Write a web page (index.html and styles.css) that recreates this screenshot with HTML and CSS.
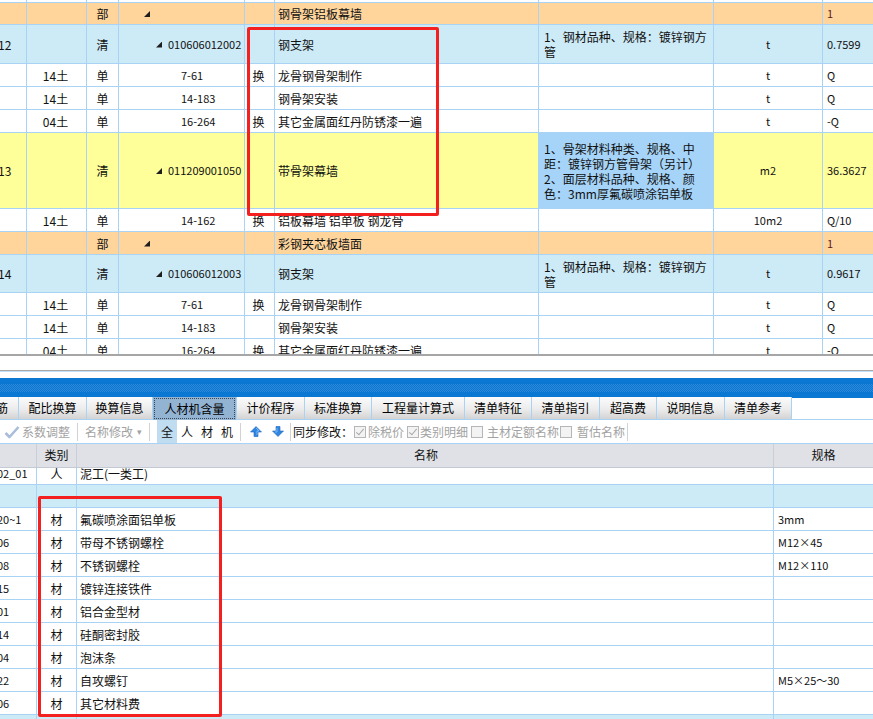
FILE: index.html
```html
<!DOCTYPE html>
<html lang="zh-CN">
<head>
<meta charset="UTF-8">
<meta name="viewport" content="width=device-width, initial-scale=1.0">
<title>分部分项工程</title>
<link rel="stylesheet" href="styles.css">
</head>
<body>
<div class="upper">
    <div class="row first"><div></div><div></div><div></div><div></div><div></div><div></div><div></div><div></div><div></div></div>
    <div class="row bu h22"><div></div><div></div><div>部</div><div class="l1"><span class="tri"></span></div><div></div><div>钢骨架铝板幕墙</div><div></div><div></div><div class="red">1</div></div>
    <div class="row qing h39"><div><span class="cut">12</span></div><div></div><div>清</div><div class="l2"><span class="tri"></span>010606012002</div><div></div><div>钢支架</div><div>1、钢材品种、规格：镀锌钢方管</div><div>t</div><div>0.7599</div></div>
    <div class="row"><div></div><div>14土</div><div>单</div><div class="l3">7-61</div><div>换</div><div>龙骨钢骨架制作</div><div></div><div>t</div><div>Q</div></div>
    <div class="row"><div></div><div>14土</div><div>单</div><div class="l3">14-183</div><div></div><div>钢骨架安装</div><div></div><div>t</div><div>Q</div></div>
    <div class="row"><div></div><div>04土</div><div>单</div><div class="l3">16-264</div><div>换</div><div>其它金属面红丹防锈漆一遍</div><div></div><div>t</div><div>-Q</div></div>
    <div class="row cur h76"><div><span class="cut">13</span></div><div></div><div>清</div><div class="l2"><span class="tri"></span>011209001050</div><div></div><div>带骨架幕墙</div><div class="sel">1、骨架材料种类、规格、中距：镀锌钢方管骨架（另计）2、面层材料品种、规格、颜色：3mm厚氟碳喷涂铝单板</div><div>m2</div><div>36.3627</div></div>
    <div class="row"><div></div><div>14土</div><div>单</div><div class="l3">14-162</div><div>换</div><div>铝板幕墙 铝单板 钢龙骨</div><div></div><div>10m2</div><div>Q/10</div></div>
    <div class="row bu"><div></div><div></div><div>部</div><div class="l1"><span class="tri"></span></div><div></div><div>彩钢夹芯板墙面</div><div></div><div></div><div class="red">1</div></div>
    <div class="row qing h38"><div><span class="cut">14</span></div><div></div><div>清</div><div class="l2"><span class="tri"></span>010606012003</div><div></div><div>钢支架</div><div>1、钢材品种、规格：镀锌钢方管</div><div>t</div><div>0.9617</div></div>
    <div class="row"><div></div><div>14土</div><div>单</div><div class="l3">7-61</div><div>换</div><div>龙骨钢骨架制作</div><div></div><div>t</div><div>Q</div></div>
    <div class="row"><div></div><div>14土</div><div>单</div><div class="l3">14-183</div><div></div><div>钢骨架安装</div><div></div><div>t</div><div>Q</div></div>
    <div class="row"><div></div><div>04土</div><div>单</div><div class="l3">16-264</div><div>换</div><div>其它金属面红丹防锈漆一遍</div><div></div><div>t</div><div>-Q</div></div>
</div>
<div class="hscroll"></div>
<div class="splitter"><div class="grip"></div></div>

<div class="tabs">
    <div class="tab edge">筋</div>
    <div class="tab">配比换算</div>
    <div class="tab">换算信息</div>
    <div class="tab active"><span>人材机含量</span></div>
    <div class="tab">计价程序</div>
    <div class="tab">标准换算</div>
    <div class="tab">工程量计算式</div>
    <div class="tab">清单特征</div>
    <div class="tab">清单指引</div>
    <div class="tab">超高费</div>
    <div class="tab">说明信息</div>
    <div class="tab">清单参考</div>
</div>

<div class="toolbar">
    <svg class="ico-check" width="16" height="16" viewBox="0 0 16 16"><path d="M1.5 9 L5.5 13 L14.5 3" fill="none" stroke="#a9bcdc" stroke-width="2.6" stroke-linejoin="round"/></svg>
    <span class="dim t-coef">系数调整</span>
    <i class="sep"></i>
    <span class="dim t-name">名称修改</span><span class="drop">▾</span>
    <i class="sep"></i>
    <span class="filt on">全</span><span class="filt">人</span><span class="filt">材</span><span class="filt">机</span>
    <i class="sep s3"></i>
    <svg class="ico-up" width="12" height="11" viewBox="0 0 12 11"><path d="M6 0.5 L11.5 6 L8 6 L8 10.5 L4 10.5 L4 6 L0.5 6 Z" fill="#2f86e0" stroke="#1f66c0" stroke-width="0.6"/><path d="M6 2 L9 5 L7 5 L7 9" fill="none" stroke="#8cc4f6" stroke-width="0.8"/></svg>
    <svg class="ico-down" width="12" height="11" viewBox="0 0 12 11"><path d="M6 10.5 L11.5 5 L8 5 L8 0.5 L4 0.5 L4 5 L0.5 5 Z" fill="#2f86e0" stroke="#1f66c0" stroke-width="0.6"/><path d="M5 2 L5 6 L3 6" fill="none" stroke="#8cc4f6" stroke-width="0.8"/></svg>
    <i class="sep s6"></i>
    <span class="sync">同步修改：</span>
    <span class="box checked b1"></span><span class="dim l-a">除税价</span>
    <span class="box checked b2"></span><span class="dim l-b">类别明细</span>
    <span class="box b3"></span><span class="dim l-c">主材定额名称</span>
    <span class="box b4"></span><span class="dim l-d">暂估名称</span>
    <i class="sep s2"></i>
</div>

<div class="mhead"><div></div><div>类别</div><div>名称</div><div>规格</div></div>
<div class="mbody">
    <div class="mrow first"><div><span class="cut3">02_01</span></div><div>人</div><div>泥工(一类工)</div><div></div></div>
    <div class="mrow qing"><div></div><div></div><div></div><div></div></div>
    <div class="mrow"><div><span class="cut3">20~1</span></div><div>材</div><div>氟碳喷涂面铝单板</div><div>3mm</div></div>
    <div class="mrow"><div><span class="cut3">06</span></div><div>材</div><div>带母不锈钢螺栓</div><div>M12×45</div></div>
    <div class="mrow"><div><span class="cut3">08</span></div><div>材</div><div>不锈钢螺栓</div><div>M12×110</div></div>
    <div class="mrow"><div><span class="cut3">15</span></div><div>材</div><div>镀锌连接铁件</div><div></div></div>
    <div class="mrow"><div><span class="cut3">01</span></div><div>材</div><div>铝合金型材</div><div></div></div>
    <div class="mrow"><div><span class="cut3">14</span></div><div>材</div><div>硅酮密封胶</div><div></div></div>
    <div class="mrow"><div><span class="cut3">04</span></div><div>材</div><div>泡沫条</div><div></div></div>
    <div class="mrow"><div><span class="cut3">22</span></div><div>材</div><div>自攻螺钉</div><div>M5×25～30</div></div>
    <div class="mrow"><div><span class="cut3">06</span></div><div>材</div><div>其它材料费</div><div></div></div>
    <div class="mrow qing"><div></div><div></div><div></div><div></div></div>
</div>

<div class="mark mark-top"></div>
<div class="mark mark-bottom"></div>
</body>
</html>
```

FILE: styles.css
```css
* {
    box-sizing: border-box;
}
body {
    margin: 0;
    width: 873px;
    height: 719px;
    overflow: hidden;
    position: relative;
    background: #fff;
    color: #111;
    font-family: "Noto Sans CJK SC", sans-serif;
    font-size: 12px;
}

/* upper grid */
.upper {
    height: 356px;
    overflow: hidden;
    border-bottom: 2px solid #a6a6a6;
}
.row {
    display: grid;
    grid-template-columns: 27px 60px 32px 126px 30px 264px 175px 109px 50px;
    height: 23px;
}
.row.first { margin-top: -20px; }
.row.h22 { height: 22px; }
.row.h39 { height: 39px; }
.row.h38 { height: 38px; }
.row.h76 { height: 76px; }
.row > div {
    display: flex;
    align-items: center;
    overflow: hidden;
    white-space: nowrap;
    line-height: 15px;
    border-right: 1px solid #a9d3f5;
    border-bottom: 1px solid #a9d3f5;
}
.row > div:nth-child(2),
.row > div:nth-child(3),
.row > div:nth-child(5),
.row > div:nth-child(8) {
    justify-content: center;
}
.row > div:nth-child(2) { padding-right: 2px; }
.row > div:nth-child(5) { padding-right: 2px; }
.row > div:nth-child(6) { padding-left: 3px; }
.row > div:nth-child(7) {
    padding: 0 4px 0 5px;
    white-space: normal;
}
.row > div:nth-child(4),
.row > div:nth-child(8),
.row > div:nth-child(9) {
    font-size: 11px;
}
.row > div:nth-child(9) { padding-left: 4px; border-right: none; }
.row .l1 { padding-left: 25px; }
.row .l2 { padding-left: 37px; }
.row .l3 { padding-left: 62px; }
.tri {
    flex-shrink: 0;
    display: inline-block;
    width: 6px;
    height: 6px;
    margin: 1px 6px 0 0;
    background: #1e1e1e;
    clip-path: polygon(100% 0, 100% 100%, 0 100%);
}
.cut { margin-left: -2px; }
.red { color: #5e1818; }
.bu { background: #ffd59c; }
.qing { background: #cdeaf7; }
.cur { background: #ffff9a; }
.row > div.sel { background: #a5d4f8; }

.hscroll {
    height: 15px;
    border-bottom: 1px solid #a8a8a8;
}
.splitter {
    height: 26px;
    border-top: 1px solid #bfe0f8;
    padding-top: 6px;
}
.grip {
    height: 20px;
    background: #0a78d2;
    padding-top: 6px;
}
.grip::before {
    content: "";
    display: block;
    height: 8px;
    background: conic-gradient(#2c88da 25%, transparent 0 50%, #2c88da 0 75%, transparent 0) 0 0 / 2px 2px;
}

/* tabs */
.tabs {
    display: flex;
    height: 23px;
    border-bottom: 1px solid #a9d3f5;
}
.tab {
    width: 68px;
    text-align: center;
    line-height: 22px;
    border-right: 1px solid #a9d3f5;
    background: linear-gradient(#fbfbfb, #ececec 55%, #d3d3d3);
    color: #000;
}
.tab:nth-child(3),
.tab:nth-child(6),
.tab:nth-child(8),
.tab:nth-child(12) { width: 67px; }
.tab:nth-child(3) { width: 66px; }
.tab:nth-child(7) { width: 93px; }
.tab:nth-child(10) { width: 57px; }
.tab.edge {
    width: 23px;
    margin-left: -4px;
    text-align: left;
}
.tab.active {
    width: 84px;
    padding: 1px;
    height: 23px;
    background: #93b3d3;
}
.tab.active span {
    display: block;
    height: 21px;
    line-height: 20px;
    border: 1px dotted #3a4656;
}

/* toolbar */
.toolbar {
    display: flex;
    align-items: center;
    height: 24px;
    border-bottom: 1px solid #a9d3f5;
    white-space: nowrap;
}
.ico-check { margin-left: 4px; }
.dim { color: #a2a2a2; }
.t-coef { margin-left: 2px; }
.sep {
    width: 1px;
    height: 18px;
    background: #d2d2d2;
    margin: 0 7px;
}
.sep.s3 { margin: 0 9px 0 3px; }
.sep.s6 { margin: 0 2px 0 6px; }
.sep.s2 { margin: 0 0 0 2px; }
.drop {
    color: #a2a2a2;
    font-size: 9px;
    margin-left: 4px;
}
.filt {
    width: 20px;
    height: 23px;
    line-height: 23px;
    text-align: center;
    color: #111;
}
.filt.on { background: #c0dcf1; }
.ico-down { margin-left: 10px; }
.sync { color: #111; }
.box {
    width: 12px;
    height: 12px;
    border: 1px solid #b6b6b6;
    background: #f3f3f3;
    position: relative;
}
.box.checked::after {
    content: "";
    position: absolute;
    left: 3px;
    top: 0px;
    width: 3px;
    height: 7px;
    border: solid #a8a8a8;
    border-width: 0 1.5px 1.5px 0;
    transform: rotate(40deg);
}
.b1 { margin-left: 1px; }
.l-a { margin-left: 2px; }
.b2 { margin-left: 3px; }
.l-b { margin-left: 1px; }
.b3 { margin-left: 3px; }
.l-c { margin-left: 4px; }
.b4 { margin-left: 1px; }
.l-d { margin-left: 5px; }

/* material grid */
.mhead,
.mrow {
    display: grid;
    grid-template-columns: 37px 40px 697px 99px;
}
.mhead {
    height: 24px;
    background: #dfe1e6;
    border-bottom: 1px solid #c4cad4;
}
.mhead > div {
    border-right: 1px solid #c9cfd9;
    text-align: center;
    line-height: 22px;
    color: #111;
}
.mhead > div:nth-child(3) { padding-left: 2px; }
.mhead > div:last-child { border-right: none; }
.mbody {
    height: 251px;
    overflow: hidden;
}
.mrow { height: 23px; }
.mrow.first { margin-top: -6px; }
.mrow > div {
    display: flex;
    align-items: center;
    overflow: hidden;
    white-space: nowrap;
    border-right: 1px solid #a9d3f5;
    border-bottom: 1px solid #a9d3f5;
}
.mrow > div:nth-child(1),
.mrow > div:nth-child(4) {
    font-size: 11px;
}
.mrow > div:nth-child(2) { justify-content: center; }
.mrow > div:nth-child(3) { padding-left: 3px; }
.mrow > div:nth-child(4) { padding-left: 4px; border-right: none; }
.cut3 { margin-left: -3px; }

/* highlight frames drawn over the grids */
.mark {
    position: absolute;
    border: 3px solid #f42020;
    border-radius: 2px;
}
.mark-top {
    left: 247px;
    top: 27px;
    width: 192px;
    height: 189px;
}
.mark-bottom {
    left: 38px;
    top: 496px;
    width: 184px;
    height: 221px;
}
```
